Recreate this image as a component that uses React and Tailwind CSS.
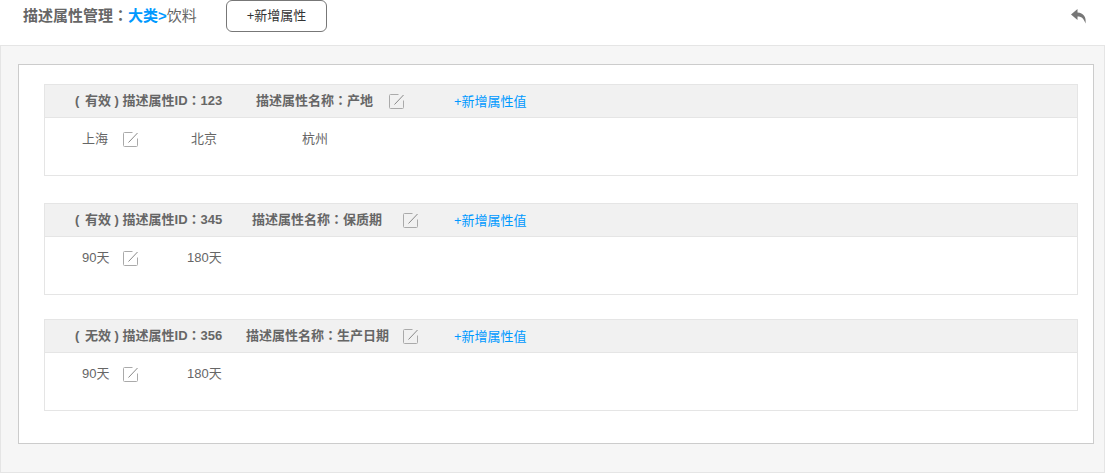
const groups = [
  {
    status: "有效",
    id: "123",
    name: "产地",
    nameClass: "ml-[33px] w-[133px]",
    linkClass: "ml-[49px]",
    values: [
      { text: "上海", className: "w-[26px] ml-[37px]", iconClass: "ml-[15px]" },
      { text: "北京", className: "w-[26px] ml-[52px]" },
      { text: "杭州", className: "w-[26px] ml-[85px]" },
    ],
  },
  {
    status: "有效",
    id: "345",
    name: "保质期",
    nameClass: "ml-[29px] w-[151px]",
    linkClass: "ml-[35px]",
    values: [
      { text: "90天", className: "w-[28px] ml-[37px]", iconClass: "ml-[13px]" },
      { text: "180天", className: "w-[35px] ml-[48px]" },
    ],
  },
  {
    status: "无效",
    id: "356",
    name: "生产日期",
    nameClass: "ml-[23px] w-[157px]",
    linkClass: "ml-[35px]",
    values: [
      { text: "90天", className: "w-[28px] ml-[37px]", iconClass: "ml-[13px]" },
      { text: "180天", className: "w-[35px] ml-[48px]" },
    ],
  },
];

function EditIcon({ className }) {
  return (
    <svg width="16" height="16" viewBox="0 0 16 16" fill="none" className={className}>
      <path d="M9.5 1.5H1.5a1 1 0 0 0-1 1v12a1 1 0 0 0 1 1h12a1 1 0 0 0 1-1V7.5" stroke="#aaa" />
      <path d="M5.5 11.5L14.5 2" stroke="#888" />
    </svg>
  );
}

// fullwidth colon sits centred in the TC font
function Colon() {
  return <span className="font-['Noto_Sans_CJK_TC',sans-serif]">：</span>;
}

function Group({ group, className }) {
  return (
    <div className={`border border-[#e5e5e5] h-[92px] ${className}`}>
      <div className="h-[33px] bg-[#f1f1f1] border-b border-[#e5e5e5] flex items-center text-[13px] text-[#666] font-bold">
        <span className="ml-[30px] w-[148px] whitespace-nowrap -mt-[1px]">
          ( <span className="ml-[2px]">{group.status}</span> ) 描述属性ID<Colon />{group.id}
        </span>
        <span className={`whitespace-nowrap -mt-[1px] ${group.nameClass}`}>
          描述属性名称<Colon />{group.name}
        </span>
        <EditIcon className="shrink-0" />
        <span className={`text-[#0099ff] font-normal whitespace-nowrap mt-[2px] ${group.linkClass}`}>+新增属性值</span>
      </div>
      <div className="flex items-center h-[43px] pb-[1px] text-[13px] text-[#666]">
        {group.values.map((v) => (
          <div key={v.text} className="flex items-center">
            <span className={`whitespace-nowrap ${v.className}`}>{v.text}</span>
            {v.iconClass && <EditIcon className={v.iconClass} />}
          </div>
        ))}
      </div>
    </div>
  );
}

export default function App() {
  return (
    <div className="w-[1105px] h-[473px] bg-white overflow-hidden font-['Liberation_Sans','Noto_Sans_CJK_SC',sans-serif]">
      <div className="h-[45px] flex items-start relative">
        <div className="ml-[23px] mt-[4px] w-[203px] text-[15px] font-bold text-[#666] whitespace-nowrap">
          描述属性管理<Colon />
          <span className="text-[#0099ff]">大类&gt;</span>
          <span className="font-normal">饮料</span>
        </div>
        <button className="w-[101px] h-[32px] border border-[#777] rounded-[6px] text-[13px] text-[#333] bg-white">
          +新增属性
        </button>
        <svg width="16" height="15" viewBox="0 0 16 15" className="absolute left-[1071px] top-[9px]">
          <path d="M6.5 0L0 5.5L6.5 11V7.5C10 7.5 12.5 8.5 14.5 14.5C15.5 8 12.5 3.8 6.5 3.5Z" fill="#777" />
        </svg>
      </div>
      <div className="h-[428px] bg-[#f6f6f6] border border-[#e5e5e5] pt-[18px] pl-[17px] pr-[10px]">
        <div className="h-[380px] bg-white border border-[#cccccc] pt-[19px] pl-[25px] pr-[15px]">
          {groups.map((g, i) => (
            <Group key={g.id} group={g} className={i === 1 ? "mt-[27px]" : i === 2 ? "mt-[24px]" : ""} />
          ))}
        </div>
      </div>
    </div>
  );
}
